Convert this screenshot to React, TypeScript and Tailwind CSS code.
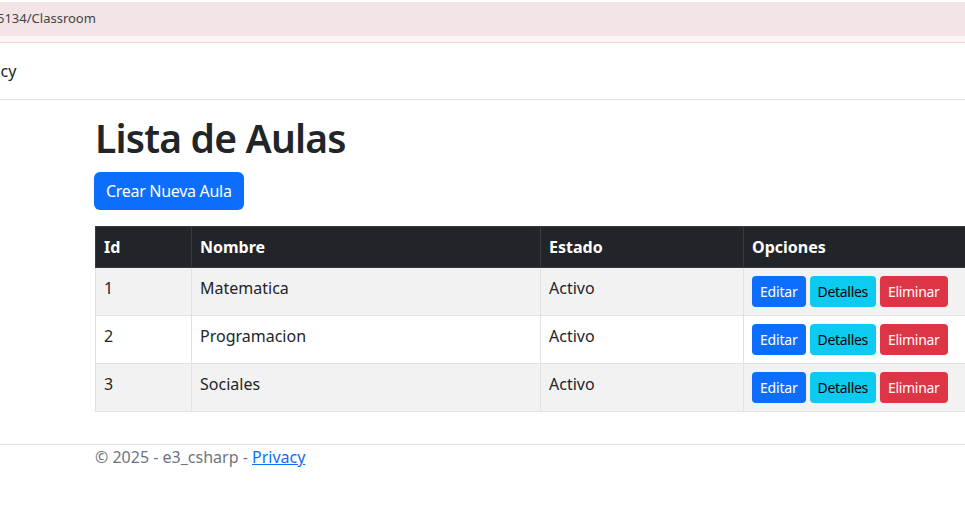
import React from "react";

type Aula = { id: number; nombre: string; estado: string };

const aulas: Aula[] = [
  { id: 1, nombre: "Matematica", estado: "Activo" },
  { id: 2, nombre: "Programacion", estado: "Activo" },
  { id: 3, nombre: "Sociales", estado: "Activo" },
];

const App = () => {
  return (
    <div className="w-full h-screen overflow-hidden bg-white font-['Noto_Sans',sans-serif] text-[#212529]">
      <div className="h-[2px] bg-white" />
      <div className="h-[34px] bg-[#f3e4e8] flex items-center text-[13px] text-[#444]">
        <span className="-ml-[3px]">5134/Classroom</span>
      </div>
      <div className="h-[7px] bg-[#fdf4f4] border-b border-[#f3d3d8]" />

      <nav className="h-[57px] flex items-center border-b border-[#dee2e6]">
        <span className="-ml-[37px] text-base">Privacy</span>
      </nav>

      <main className="pl-[95px]">
        <h1 className="mt-[14px] text-[39px] leading-[48px] font-semibold tracking-[-0.8px]">Lista de Aulas</h1>
        <button className="-ml-px mt-[10px] h-[38px] px-3 rounded-md bg-[#0d6efd] text-white text-base tracking-[-0.3px]">
          Crear Nueva Aula
        </button>

        <table className="mt-4 w-[1116px] border-collapse text-base">
          <thead>
            <tr className="bg-[#212529] text-white">
              <th className="w-[96px] h-[41px] px-2 text-left font-bold border border-[#373b3e]">Id</th>
              <th className="w-[349px] px-2 text-left font-bold border border-[#373b3e]">Nombre</th>
              <th className="w-[203px] px-2 text-left font-bold border border-[#373b3e]">Estado</th>
              <th className="px-2 text-left font-bold border border-[#373b3e]">Opciones</th>
            </tr>
          </thead>
          <tbody>
            {aulas.map((a, i) => (
              <tr key={a.id} className={i % 2 === 0 ? "bg-[#f2f2f2]" : "bg-white"}>
                <td className="h-[48px] px-2 pt-2 align-top leading-6 border border-[#dee2e6]">{a.id}</td>
                <td className="px-2 pt-2 align-top leading-6 border border-[#dee2e6]">{a.nombre}</td>
                <td className="px-2 pt-2 align-top leading-6 border border-[#dee2e6]">{a.estado}</td>
                <td className="px-2 py-2 align-top border border-[#dee2e6]">
                  <div className="flex gap-1">
                    <button className="h-[31px] px-2 rounded bg-[#0d6efd] text-white text-[14px] tracking-[-0.2px]">Editar</button>
                    <button className="h-[31px] px-2 rounded bg-[#0dcaf0] text-black text-[14px] tracking-[-0.3px]">Detalles</button>
                    <button className="h-[31px] px-2 rounded bg-[#dc3545] text-white text-[14px] tracking-[-0.3px]">Eliminar</button>
                  </div>
                </td>
              </tr>
            ))}
          </tbody>
        </table>
      </main>

      <footer className="mt-[32px] border-t border-[#dee2e6] pl-[95px] text-[#6c757d] leading-6">
        © 2025 - e3_csharp - <a className="text-[#0d6efd] underline" href="#">Privacy</a>
      </footer>
    </div>
  );
};

export default App;
